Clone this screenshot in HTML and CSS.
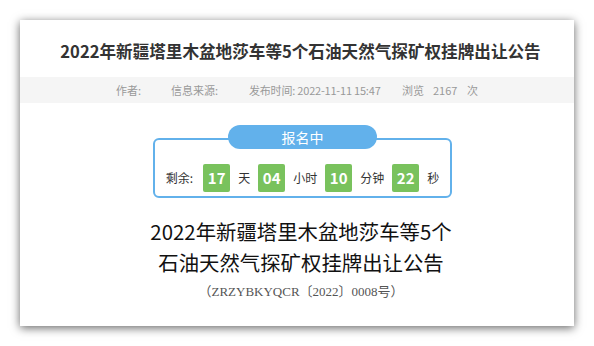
FILE: index.html
```html
<!DOCTYPE html>
<html lang="zh-CN">
<head>
<meta charset="utf-8">
<link rel="stylesheet" href="styles.css">
</head>
<body>
<div class="card">
  <h1 class="title">2022年新疆塔里木盆地莎车等5个石油天然气探矿权挂牌出让公告</h1>
  <div class="meta">
    <span class="m m1">作者:</span>
    <span class="m m2">信息来源:</span>
    <span class="m m3">发布时间:&nbsp;2022-11-11 15:47</span>
    <span class="m m4">浏览</span>
    <span class="m m5">2167</span>
    <span class="m m6">次</span>
  </div>
  <div class="countdown">
    <div class="tab">报名中</div>
    <div class="cbox">
      <span class="lbl first">剩余:</span>
      <span class="num">17</span><span class="lbl">天</span>
      <span class="num">04</span><span class="lbl">小时</span>
      <span class="num">10</span><span class="lbl">分钟</span>
      <span class="num">22</span><span class="lbl last">秒</span>
    </div>
  </div>
  <h2 class="headline">2022年新疆塔里木盆地莎车等5个石油天然气探矿权挂牌出让公告</h2>
  <p class="code">（ZRZYBKYQCR〔2022〕0008号）</p>
</div>
</body>
</html>
```
FILE: styles.css
```css
html, body { margin: 0; padding: 0; background: #fff; }
body { padding: 20px; font-family: "Noto Sans CJK SC", "Noto Sans", sans-serif; }
.card {
  width: 554px;
  height: 306px;
  background: #fff;
  box-shadow: 0 2px 9px rgba(0,0,0,0.6);
  display: flex;
  flex-direction: column;
  align-items: center;
}
.title {
  margin: 19px 0 14px;
  font-size: 16.6px;
  line-height: 24px;
  font-weight: bold;
  color: #333;
  padding-left: 7px;
}
.meta {
  align-self: stretch;
  height: 26px;
  line-height: 26px;
  background: #f5f5f5;
  color: #999;
  font-size: 11px;
  display: flex;
  justify-content: center;
  white-space: nowrap;
}
.m { flex-shrink: 0; }
.m1 { width: 55px; }
.m2 { width: 78px; }
.m3 { width: 153px; letter-spacing: -0.2px; }
.m4 { width: 31px; }
.m5 { width: 34px; }
.m6 { width: 11px; }
.countdown {
  margin-top: 22px;
  display: flex;
  flex-direction: column;
  align-items: center;
  padding-left: 11px;
}
.tab {
  position: relative;
  z-index: 1;
  width: 149px;
  height: 24px;
  line-height: 24px;
  border-radius: 12px;
  background: #62b1eb;
  color: #fff;
  font-size: 14px;
  text-align: center;
  margin-bottom: -11px;
}
.cbox {
  box-sizing: border-box;
  width: 299px;
  height: 60px;
  border: 2px solid #62b1eb;
  border-radius: 6px;
  padding: 24px 4px 4px;
  display: flex;
  align-items: center;
  justify-content: center;
}
.lbl {
  flex-shrink: 0;
  white-space: nowrap;
  font-size: 12px;
  color: #333;
  margin: 0 8px;
  line-height: 28px;
}
.lbl.first { margin-left: 0; margin-right: 10px; }
.lbl.last { margin-right: 0; }
.num {
  flex-shrink: 0;
  width: 27px;
  height: 28px;
  line-height: 28px;
  background: #79c25d;
  color: #fff;
  font-size: 15px;
  font-weight: bold;
  text-align: center;
  border-radius: 2px;
}
.headline {
  width: 320px;
  margin: 18px 0 0;
  font-size: 20.4px;
  line-height: 31px;
  font-weight: normal;
  color: #111;
  text-align: center;
  padding-left: 8px;
}
.code {
  margin: 4px 0 0;
  font-family: "Liberation Serif", "Noto Sans CJK SC", serif;
  font-size: 13px;
  line-height: 20px;
  color: #555;
  padding-left: 8px;
}
```
